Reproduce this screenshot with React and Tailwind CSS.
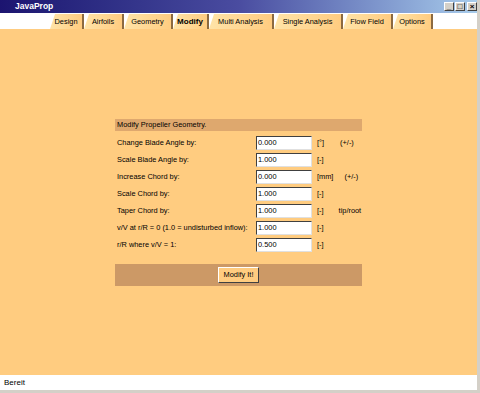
const tabs = [
  { name: "Design", w: 34 },
  { name: "Airfoils", w: 40 },
  { name: "Geometry", w: 49 },
  { name: "Modify", w: 36, active: true },
  { name: "Multi Analysis", w: 65 },
  { name: "Single Analysis", w: 69 },
  { name: "Flow Field", w: 50 },
  { name: "Options", w: 40 },
];

const rows = [
  { label: "Change Blade Angle by:", value: "0.000", unit: "[°]", extra: "(+/-)", extraPad: "pl-[16px]" },
  { label: "Scale Blade Angle by:", value: "1.000", unit: "[-]" },
  { label: "Increase Chord by:", value: "0.000", unit: "[mm]", extra: "(+/-)", extraPad: "pl-[11px]" },
  { label: "Scale Chord by:", value: "1.000", unit: "[-]" },
  { label: "Taper Chord by:", value: "1.000", unit: "[-]", extra: "tip/root", extraPad: "pl-[15px]" },
  { label: "v/V at r/R = 0 (1.0 = undisturbed inflow):", value: "1.000", unit: "[-]" },
  { label: "r/R where v/V = 1:", value: "0.500", unit: "[-]" },
];

function WinButton({ children }) {
  return (
    <div className="w-[10px] h-[9px] bg-[#d4d0c8] border border-t-white border-l-white border-r-[#404040] border-b-[#404040] flex items-center justify-center text-[8px] leading-none font-bold text-black">
      {children}
    </div>
  );
}

export default function App() {
  return (
    <div
      className="w-[480px] h-[393px] bg-[#d4d0c8] pr-[3px] pb-[3px] flex flex-col overflow-hidden"
      style={{ fontFamily: '"Liberation Sans", Arial, sans-serif' }}
    >
      {/* Title bar */}
      <div className="h-[13px] flex items-center justify-between bg-gradient-to-r from-[#1c1470] via-[#4a4ca0] to-[#a8cceb] pl-[15px] pr-[0px]">
        <span className="text-white font-bold text-[8.5px] leading-none">JavaProp</span>
        <div className="flex gap-[1px]">
          <WinButton>_</WinButton>
          <WinButton>□</WinButton>
          <div className="ml-[1px]">
            <WinButton>×</WinButton>
          </div>
        </div>
      </div>

      {/* Tabs */}
      <div className="h-[16px] bg-white flex items-end pl-[50px]">
        {tabs.map((t) => (
          <div
            key={t.name}
            className={`h-[15px] shrink-0 flex items-center justify-center border-r-2 border-[#8c6a40] bg-gradient-to-r from-[#ffe4a8] to-[#ffcc80] [clip-path:polygon(5px_0,100%_0,100%_100%,0_100%)] text-black ${
              t.active ? "font-bold text-[8px]" : "text-[7.4px]"
            }`}
            style={{ width: t.w }}
          >
            {t.name}
          </div>
        ))}
      </div>

      {/* Main */}
      <div className="flex-1 bg-[#ffcc80] flex items-center justify-center">
        <div className="w-[247px] flex flex-col text-[7.4px] text-black">
          <div className="h-[12px] bg-[#dea86e] flex items-center pl-[2px]">
            Modify Propeller Geometry.
          </div>
          <div className="flex flex-col gap-[3px] pt-[5px] pb-[12px]">
            {rows.map((r) => (
              <div key={r.label} className="h-[14px] flex items-center">
                <span className="w-[141px] shrink-0 pl-[2px] whitespace-nowrap">{r.label}</span>
                <div className="w-[56px] h-[14px] shrink-0 bg-white border border-t-[#404040] border-l-[#404040] border-r-[#e0e0e0] border-b-[#e0e0e0] flex items-center pl-[1px]">
                  {r.value}
                </div>
                <span className="pl-[5px]">{r.unit}</span>
                {r.extra && <span className={r.extraPad}>{r.extra}</span>}
              </div>
            ))}
          </div>
          <div className="h-[22px] bg-[#cc9966] flex items-center justify-center">
            <div className="h-[16px] px-[5px] bg-[#ffcc80] border border-t-white border-l-white border-r-[#404040] border-b-[#404040] flex items-center">
              Modify It!
            </div>
          </div>
        </div>
      </div>

      {/* Status bar */}
      <div className="h-[15px] bg-white flex items-center pl-[4px] text-[8px] text-black">
        Bereit
      </div>
    </div>
  );
}
